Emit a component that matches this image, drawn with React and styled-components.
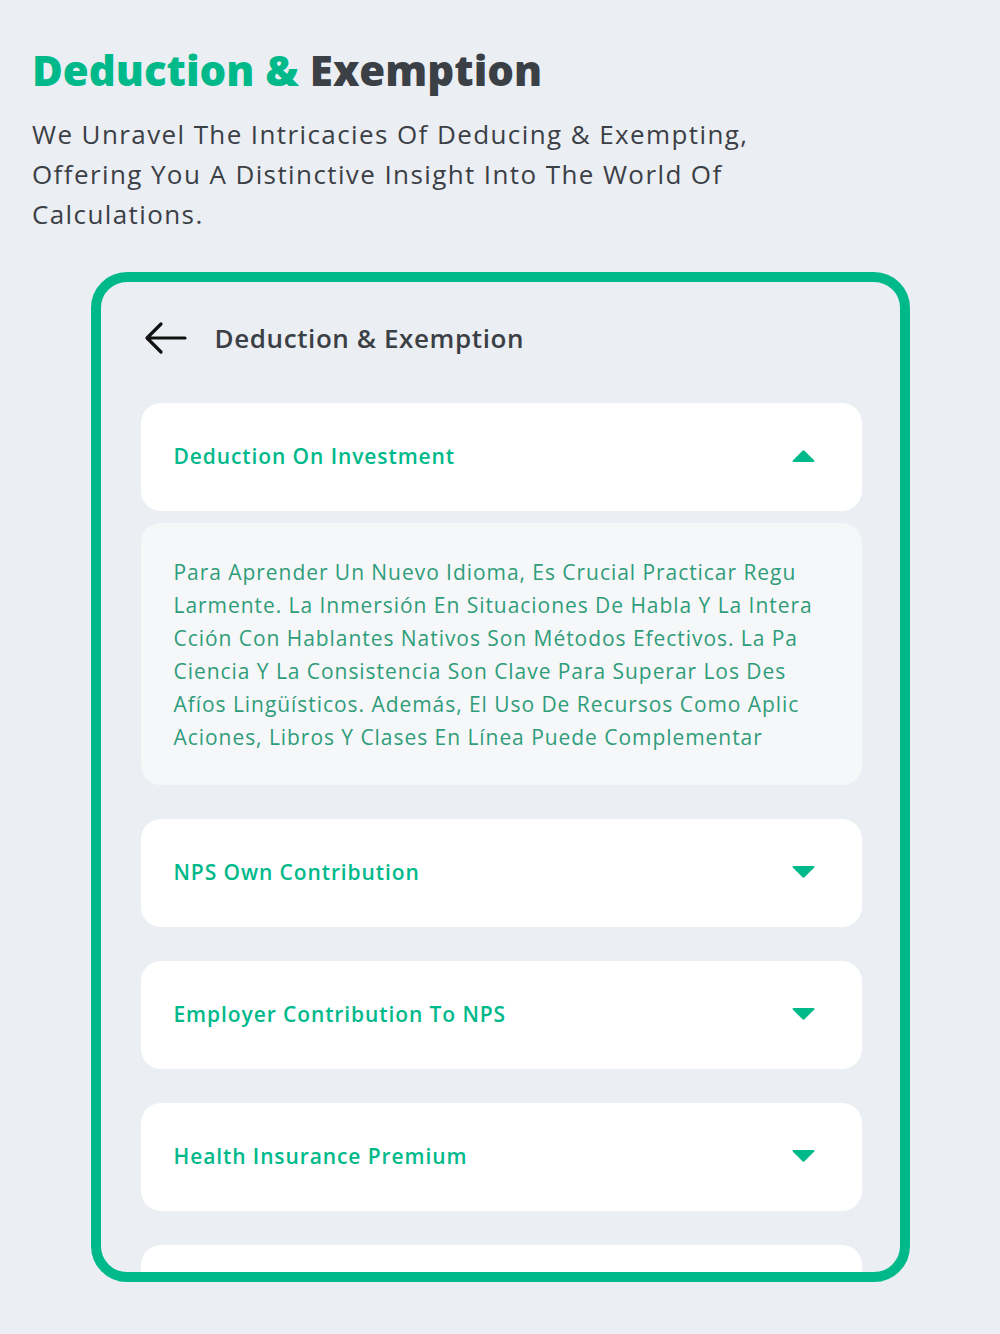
import React from "react";
import styled, { createGlobalStyle } from "styled-components";

const Global = createGlobalStyle`
  html, body { margin: 0; padding: 0; background: #ebeef3; }
  body { font-family: "Open Sans", "Noto Sans", sans-serif; }
  * { box-sizing: border-box; }
`;

const GREEN = "#00b98a";

const Page = styled.div`
  width: 1000px;
  min-height: 1334px;
  background: #ebeef3;
  padding: 44px 32px 0;
`;

const Title = styled.h1`
  margin: 0;
  font-size: 42px;
  line-height: 52px;
  font-weight: 800;
  letter-spacing: 0;
  color: #3b3f46;
`;

const Accent = styled.span`
  color: ${GREEN};
`;

const Lead = styled.p`
  margin: 18px 0 0;
  font-size: 26px;
  line-height: 40px;
  font-weight: 400;
  letter-spacing: 1.4px;
  color: #3b3f46;
  white-space: nowrap;
`;

const CardWrap = styled.div`
  display: flex;
  justify-content: center;
  margin: 38px -32px 0;
`;

const Card = styled.div`
  width: 819px;
  height: 1010px;
  border: 10px solid ${GREEN};
  border-radius: 36px;
  overflow: hidden;
  padding: 0 38px 0 40px;
  background: #ebeef3;
`;

const Header = styled.div`
  height: 112px;
  display: flex;
  align-items: center;
  gap: 27px;
  padding-left: 3px;
  margin-bottom: 9px;
`;

const HeaderTitle = styled.h2`
  margin: 0;
  font-size: 26px;
  font-weight: 600;
  letter-spacing: 0.6px;
  color: #3b3f46;
`;

const List = styled.div`
  display: flex;
  flex-direction: column;
`;

const Item = styled.div`
  height: 108px;
  background: #ffffff;
  border-radius: 20px;
  display: flex;
  align-items: center;
  justify-content: space-between;
  padding: 0 46px 3px 33px;
  margin-bottom: ${(p) => (p.$open ? "12px" : "34px")};
  flex-shrink: 0;
`;

const ItemTitle = styled.span`
  font-size: 21px;
  font-weight: 600;
  letter-spacing: 0.9px;
  color: ${GREEN};
`;

const Panel = styled.div`
  background: #f6f7f9;
  border-radius: 20px;
  padding: 33px 33px 30px;
  margin-bottom: 34px;
  height: 262px;
`;

const PanelLine = styled.span`
  display: block;
  font-size: 21px;
  line-height: 33px;
  letter-spacing: 0.95px;
  color: #2f9d7a;
  white-space: nowrap;
`;

const Arrow = () => (
  <svg width="44" height="34" viewBox="0 0 44 34" fill="none">
    <path d="M41 17H4M17 3L3 17L17 31" stroke="#111" strokeWidth="3.2" strokeLinecap="round" strokeLinejoin="round" />
  </svg>
);

const Caret = ({ up }) => (
  <svg width="25" height="14" viewBox="0 0 25 14" style={{ transform: up ? "none" : "rotate(180deg)" }}>
    <path d="M11 2.2 Q12.5 0.5 14 2.2 L23.3 11.6 Q24 13 22.4 13 H2.6 Q1 13 1.7 11.6 Z" fill={GREEN} />
  </svg>
);

const lines = [
  "Para Aprender Un Nuevo Idioma, Es Crucial Practicar Regu",
  "Larmente. La Inmersión En Situaciones De Habla Y La Intera",
  "Cción Con Hablantes Nativos Son Métodos Efectivos. La Pa",
  "Ciencia Y La Consistencia Son Clave Para Superar Los Des",
  "Afíos Lingüísticos. Además, El Uso De Recursos Como Aplic",
  "Aciones, Libros Y Clases En Línea Puede Complementar",
];

const items = ["NPS Own Contribution", "Employer Contribution To NPS", "Health Insurance Premium", "House Rent Allowance"];

export default function App() {
  return (
    <>
      <Global />
      <Page>
        <Title>
          <Accent>Deduction &amp;</Accent> Exemption
        </Title>
        <Lead>
          We Unravel The Intricacies Of Deducing &amp; Exempting,
          <br />
          Offering You A Distinctive Insight Into The World Of
          <br />
          Calculations.
        </Lead>
        <CardWrap>
          <Card>
            <Header>
              <Arrow />
              <HeaderTitle>Deduction &amp; Exemption</HeaderTitle>
            </Header>
            <List>
              <Item $open>
                <ItemTitle>Deduction On Investment</ItemTitle>
                <Caret up />
              </Item>
              <Panel>
                {lines.map((l) => (
                  <PanelLine key={l}>{l}</PanelLine>
                ))}
              </Panel>
              {items.map((t, i) => (
                <Item key={t}>
                  <ItemTitle>{i < 3 ? t : ""}</ItemTitle>
                  {i < 3 && <Caret />}
                </Item>
              ))}
            </List>
          </Card>
        </CardWrap>
      </Page>
    </>
  );
}
